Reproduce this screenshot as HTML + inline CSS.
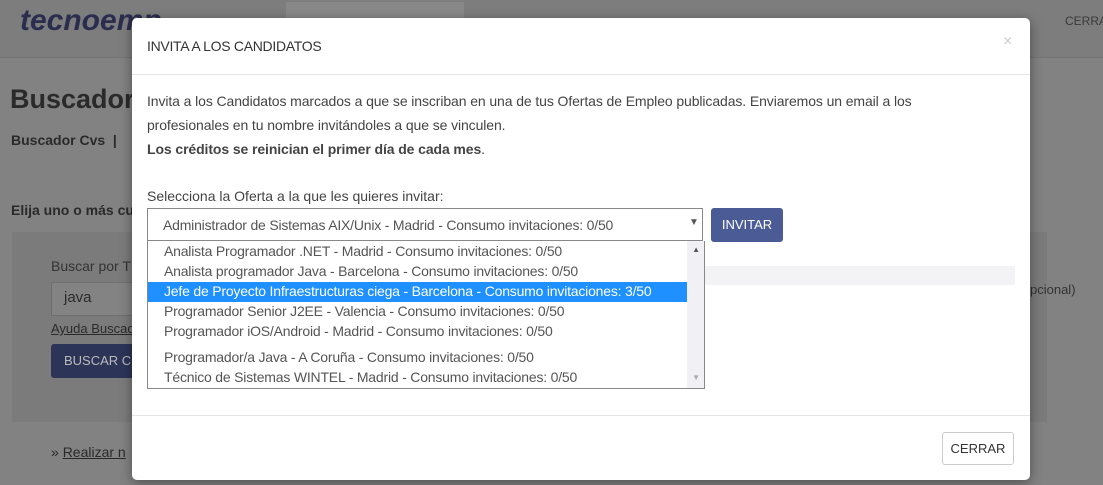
<!DOCTYPE html><html><head><style>
body{margin:0;width:1103px;height:485px;overflow:hidden;font-family:"Liberation Sans",sans-serif;background:#828282;position:relative}
.a{position:absolute}
.m{left:132px;top:18px;width:898px;height:462px;background:#fff;border-radius:5px;box-shadow:0 3px 12px rgba(0,0,0,.4)}
.opt{position:absolute;left:16px;font-size:14px;color:#555;white-space:nowrap;letter-spacing:-0.2px}
</style></head><body>
<div class="a" style="left:0;top:0;width:1103px;height:57px;background:#7d7d7d;border-bottom:1px solid #747474"></div>
<div class="a" style="left:20px;top:4px;font-size:30px;font-weight:bold;font-style:italic;color:#2b2d4e">tecnoemp</div>
<div class="a" style="left:286px;top:2px;width:178px;height:16px;background:#888"></div>
<div class="a" style="left:1065px;top:14px;font-size:12px;color:#3a3a3a">CERRA</div>
<div class="a" style="left:10px;top:84px;font-size:27px;font-weight:bold;color:#2a2a2a">Buscador</div>
<div class="a" style="left:11px;top:132px;font-size:14px;font-weight:bold;color:#2a2a2a">Buscador Cvs &nbsp;|</div>
<div class="a" style="left:11px;top:202px;font-size:14px;font-weight:bold;color:#2a2a2a">Elija uno o más cu</div>
<div class="a" style="left:12px;top:232px;width:1035px;height:190px;background:#7b7b7b"></div>
<div class="a" style="left:51px;top:258px;font-size:14px;color:#333">Buscar por T</div>
<div class="a" style="left:51px;top:282px;width:90px;height:32px;background:#838383;border:1px solid #6e6e6e"></div>
<div class="a" style="left:64px;top:289px;font-size:15px;color:#2a2a2a">java</div>
<div class="a" style="left:51px;top:321px;font-size:13px;color:#2a2a2a;text-decoration:underline">Ayuda Buscad</div>
<div class="a" style="left:51px;top:344px;width:90px;height:34px;background:#2c3558;border-radius:3px;color:#bbb;font-size:13px;line-height:34px;padding-left:13px;box-sizing:border-box">BUSCAR CU</div>
<div class="a" style="left:51px;top:444px;font-size:14px;color:#2a2a2a">» <u>Realizar n</u></div>
<div class="a" style="left:1030px;top:282px;font-size:13px;color:#333">pcional)</div>
<div class="a m">
<div class="a" style="left:15px;top:20px;font-size:14px;color:#333;letter-spacing:-0.3px">INVITA A LOS CANDIDATOS</div>
<div class="a" style="left:871px;top:15px;font-size:16px;color:#ccc">×</div>
<div class="a" style="left:0;top:56px;width:898px;height:1px;background:#e5e5e5"></div>
<div class="a" style="left:15px;top:71px;width:840px;font-size:14px;line-height:24px;color:#444;letter-spacing:-0.1px">Invita a los Candidatos marcados a que se inscriban en una de tus Ofertas de Empleo publicadas. Enviaremos un email a los<br>profesionales en tu nombre invitándoles a que se vinculen.<br><b>Los créditos se reinician el primer día de cada mes</b>.</div>
<div class="a" style="left:15px;top:170px;font-size:14px;color:#444">Selecciona la Oferta a la que les quieres invitar:</div>
<div class="a" style="left:15px;top:190px;width:556px;height:33px;border:1px solid #888;box-sizing:border-box"></div>
<div class="a" style="left:31px;top:199px;font-size:14px;color:#555;letter-spacing:-0.2px">Administrador de Sistemas AIX/Unix - Madrid - Consumo invitaciones: 0/50</div>
<div class="a" style="left:557px;top:199px;font-size:10px;color:#555">▼</div>
<div class="a" style="left:579px;top:190px;width:72px;height:34px;background:#4a5b96;border-radius:3px;color:#fff;font-size:13px;line-height:34px;text-align:center">INVITAR</div>
<div class="a" style="left:571px;top:248px;width:312px;height:19px;background:#f3f3f5"></div>
<div class="a" style="left:15px;top:223px;width:558px;height:148px;border:1px solid #888;border-top:none;box-sizing:border-box;background:#fff">
<div class="a" style="right:0;top:0;width:17px;height:147px;background:#f0f0f5"></div>
<div class="a" style="right:4px;top:4px;font-size:8px;color:#555">▲</div>
<div class="a" style="right:4px;top:132px;font-size:8px;color:#aaa">▼</div>
<div class="opt" style="top:2px">Analista Programador .NET - Madrid - Consumo invitaciones: 0/50</div>
<div class="opt" style="top:22px">Analista programador Java - Barcelona - Consumo invitaciones: 0/50</div>
<div class="a" style="left:0;top:41px;width:539px;height:20px;background:#1e90ff"></div>
<div class="opt" style="top:42px;color:#fff">Jefe de Proyecto Infraestructuras ciega - Barcelona - Consumo invitaciones: 3/50</div>
<div class="opt" style="top:62px">Programador Senior J2EE - Valencia - Consumo invitaciones: 0/50</div>
<div class="opt" style="top:82px">Programador iOS/Android - Madrid - Consumo invitaciones: 0/50</div>
<div class="opt" style="top:108px">Programador/a Java - A Coruña - Consumo invitaciones: 0/50</div>
<div class="opt" style="top:128px">Técnico de Sistemas WINTEL - Madrid - Consumo invitaciones: 0/50</div>
</div>
<div class="a" style="left:0;top:397px;width:898px;height:1px;background:#e5e5e5"></div>
<div class="a" style="left:810px;top:414px;width:72px;height:33px;border:1px solid #ccc;border-radius:3px;box-sizing:border-box;font-size:13px;color:#333;text-align:center;line-height:31px">CERRAR</div>
</div>
</body></html>
